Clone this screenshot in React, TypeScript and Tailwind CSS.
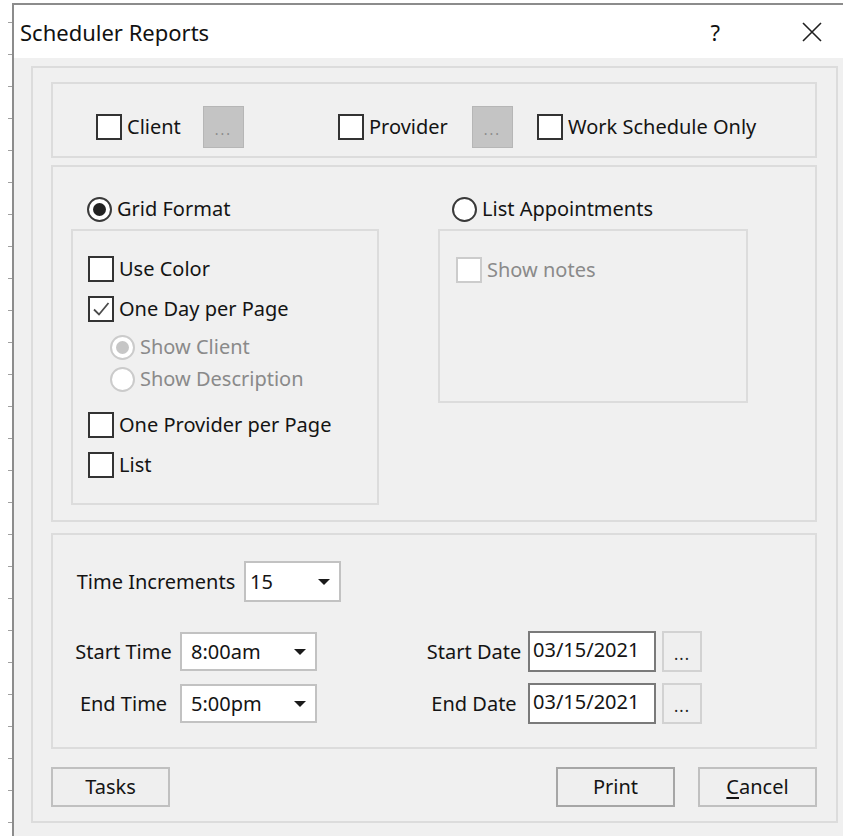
import React from "react";

const font = "font-['Noto_Sans',sans-serif]";

const CheckBox = ({ checked = false, disabled = false }: { checked?: boolean; disabled?: boolean }) => (
    <span
        className={`flex h-[26px] w-[26px] shrink-0 items-center justify-center border-2 bg-white ${
            disabled ? "border-[#cccccc]" : "border-[#333333]"
        }`}
    >
        {checked && (
            <svg width="18" height="18" viewBox="0 0 18 18">
                <path d="M2 9.5 L7 14.5 L16.5 3" fill="none" stroke="#4a4a4a" strokeWidth="1.8" />
            </svg>
        )}
    </span>
);

const Radio = ({ checked = false, disabled = false }: { checked?: boolean; disabled?: boolean }) => (
    <span
        className={`flex h-[25px] w-[25px] shrink-0 items-center justify-center rounded-full border-2 bg-white ${
            disabled ? "border-[#cbcbcb]" : "border-[#3a3a3a]"
        }`}
    >
        {checked && (
            <span className={`h-[13px] w-[13px] rounded-full ${disabled ? "bg-[#c6c6c6]" : "bg-[#222222]"}`} />
        )}
    </span>
);

const Option = ({
    children,
    disabled = false,
    control,
}: {
    children: React.ReactNode;
    disabled?: boolean;
    control: React.ReactNode;
}) => (
    <div className="flex h-[26px] items-center gap-[5px]">
        {control}
        <span className={`whitespace-nowrap ${disabled ? "text-[#8a8a8a]" : "text-[#141414]"}`}>{children}</span>
    </div>
);

const Arrow = () => (
    <svg width="12" height="6" viewBox="0 0 12 6">
        <path d="M0 0 H12 L6 6 Z" fill="#1a1a1a" />
    </svg>
);

const Combo = ({ value, width, height, padLeft }: { value: string; width: string; height: string; padLeft: string }) => (
    <div className={`flex items-center justify-between border-2 border-[#c2c2c2] bg-white pr-[9px] ${width} ${height} ${padLeft}`}>
        <span className="text-[#141414]">{value}</span>
        <Arrow />
    </div>
);

const DateField = ({ value }: { value: string }) => (
    <div className="flex items-center">
        <div className="flex h-[41px] w-[128px] items-center border-2 border-[#7a7a7a] bg-white pl-[3px] pb-[3px]">
            <span className="text-[#141414]">{value}</span>
        </div>
        <div className="ml-[6px] flex h-[41px] w-[40px] items-center justify-center border-2 border-[#d2d2d2] bg-[#efefef] pt-[4px] text-[16px] tracking-[1px] text-[#222222]">
            ...
        </div>
    </div>
);

const Ellipsis = () => (
    <div className="flex h-[42px] w-[41px] items-center justify-center border border-[#b6b6b6] bg-[#c4c4c4] pt-[6px] text-[14px] tracking-[2px] text-[#8a8a8a]">
        ...
    </div>
);

const Button = ({ children, primary = false }: { children: React.ReactNode; primary?: boolean }) => (
    <div
        className={`flex h-[40px] w-[119px] items-center justify-center border-2 bg-[#efefef] text-[#141414] ${
            primary ? "border-[#a6a6a6]" : "border-[#c0c0c0]"
        }`}
    >
        {children}
    </div>
);

const App: React.FC = () => {
    return (
        <div className={`flex h-[836px] w-[843px] overflow-hidden bg-white text-[20px] leading-none ${font}`}>
            {/* ruler strip on the left */}
            <div className="flex w-[12px] shrink-0 flex-col items-end gap-[31px] pt-[22px]">
                {Array.from({ length: 26 }).map((_, i) => (
                    <div key={i} className="h-px w-[4px] shrink-0 bg-[#a0a0a0]" />
                ))}
            </div>

            <div className="mt-[3px] flex flex-1 flex-col border-l-2 border-t-2 border-[#8c8c8c]">
                {/* title bar */}
                <div className="flex h-[53px] shrink-0 items-center bg-white pl-[6px] pr-[21px]">
                    <span className="text-[22px] text-[#111111]">Scheduler Reports</span>
                    <span className="ml-auto text-[22px] text-[#111111]">?</span>
                    <svg className="ml-[82px]" width="20" height="20" viewBox="0 0 20 20">
                        <path d="M1 1 L19 19 M19 1 L1 19" stroke="#1f1f1f" strokeWidth="1.6" />
                    </svg>
                </div>

                {/* client area */}
                <div className="flex flex-1 flex-col bg-[#f0f0f0] pb-[13px] pl-[17px] pr-[5px] pt-[8px]">
                    <div className="flex flex-1 flex-col border-2 border-[#dcdcdc] pl-[18px] pt-[14px]">
                        {/* filter row */}
                        <div className="h-[76px] w-[766px] border-2 border-[#dcdcdc] pl-[43px] pt-[22px]">
                            <div className="flex h-[42px] items-center">
                                <div className="w-[107px]">
                                    <Option control={<CheckBox />}>Client</Option>
                                </div>
                                <Ellipsis />
                                <div className="ml-[94px] w-[134px]">
                                    <Option control={<CheckBox />}>Provider</Option>
                                </div>
                                <Ellipsis />
                                <div className="ml-[24px]">
                                    <Option control={<CheckBox />}>Work Schedule Only</Option>
                                </div>
                            </div>
                        </div>

                        {/* format options */}
                        <div className="mt-[7px] flex h-[357px] w-[766px] border-2 border-[#dcdcdc] pl-[18px] pt-[29px]">
                            <div className="w-[308px]">
                                <div className="pl-[16px]">
                                    <Option control={<Radio checked />}>Grid Format</Option>
                                </div>
                                <div className="mt-[7px] flex h-[276px] flex-col border-2 border-[#dcdcdc] pl-[15px] pt-[25px]">
                                    <Option control={<CheckBox />}>Use Color</Option>
                                    <div className="mt-[14px]">
                                        <Option control={<CheckBox checked />}>One Day per Page</Option>
                                    </div>
                                    <div className="mt-[12px] flex flex-col gap-[6px] pl-[22px]">
                                        <Option disabled control={<Radio checked disabled />}>
                                            Show Client
                                        </Option>
                                        <Option disabled control={<Radio disabled />}>
                                            Show Description
                                        </Option>
                                    </div>
                                    <div className="mt-[20px]">
                                        <Option control={<CheckBox />}>One Provider per Page</Option>
                                    </div>
                                    <div className="mt-[14px]">
                                        <Option control={<CheckBox />}>List</Option>
                                    </div>
                                </div>
                            </div>
                            <div className="ml-[59px] w-[310px]">
                                <div className="pl-[14px]">
                                    <Option control={<Radio />}>List Appointments</Option>
                                </div>
                                <div className="mt-[7px] h-[174px] border-2 border-[#dcdcdc] pl-[16px] pt-[26px]">
                                    <Option disabled control={<CheckBox disabled />}>
                                        Show notes
                                    </Option>
                                </div>
                            </div>
                        </div>

                        {/* times and dates */}
                        <div className="mt-[11px] h-[216px] w-[766px] border-2 border-[#dcdcdc] pt-[26px]">
                            <div className="flex h-[41px] items-center">
                                <span className="ml-[15px] w-[176px] text-center text-[#141414]">Time Increments</span>
                                <Combo value="15" width="w-[97px]" height="h-[41px]" padLeft="pl-[4px]" />
                            </div>
                            <div className="mt-[29px] flex h-[41px] items-center">
                                <span className="ml-[14px] w-[113px] text-center text-[#141414]">Start Time</span>
                                <Combo value="8:00am" width="w-[137px]" height="h-[39px]" padLeft="pl-[9px]" />
                                <span className="ml-[103px] w-[108px] text-center text-[#141414]">Start Date</span>
                                <DateField value="03/15/2021" />
                            </div>
                            <div className="mt-[11px] flex h-[41px] items-center">
                                <span className="ml-[14px] w-[113px] text-center text-[#141414]">End Time</span>
                                <Combo value="5:00pm" width="w-[137px]" height="h-[39px]" padLeft="pl-[9px]" />
                                <span className="ml-[103px] w-[108px] text-center text-[#141414]">End Date</span>
                                <DateField value="03/15/2021" />
                            </div>
                        </div>

                        {/* dialog buttons */}
                        <div className="mt-[18px] flex w-[766px] items-center justify-between">
                            <Button>Tasks</Button>
                            <div className="flex gap-[23px]">
                                <Button primary>Print</Button>
                                <Button>
                                    <span>
                                        <span className="underline underline-offset-[3px]">C</span>ancel
                                    </span>
                                </Button>
                            </div>
                        </div>
                    </div>
                </div>
            </div>
        </div>
    );
};

export default App;
